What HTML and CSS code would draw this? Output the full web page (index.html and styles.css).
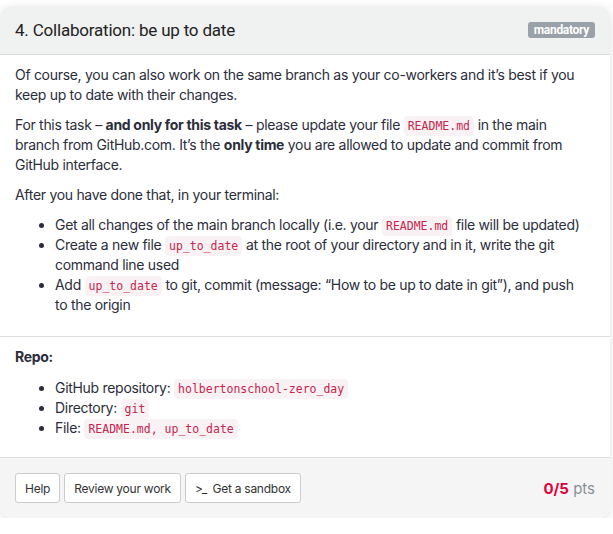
FILE: index.html
```html
<!DOCTYPE html>
<html>
<head>
<meta charset="utf-8">
<link rel="stylesheet" href="styles.css">
</head>
<body>
<div class="card">
  <div class="card-header">
    <h3 class="title">4. Collaboration: be up to date</h3>
    <span class="badge">mandatory</span>
  </div>
  <div class="card-body">
    <p>Of course, you can also work on the same branch as your co-workers and it’s best if you keep up to date with their changes.</p>
    <p>For this task – <strong>and only for this task</strong> – please update your file <code>README.md</code> in the main branch from GitHub.com. It’s the <strong>only time</strong> you are allowed to update and commit from GitHub interface.</p>
    <p>After you have done that, in your terminal:</p>
    <ul>
      <li>Get all changes of the main branch locally (i.e. your <code>README.md</code> file will be updated)</li>
      <li>Create a new file <code>up_to_date</code> at the root of your directory and in it, write the git command line used</li>
      <li>Add <code>up_to_date</code> to git, commit (message: “How to be up to date in git”), and push to the origin</li>
    </ul>
  </div>
  <div class="card-body repo">
    <p><strong>Repo:</strong></p>
    <ul>
      <li>GitHub repository: <code>holbertonschool-zero_day</code></li>
      <li>Directory: <code>git</code></li>
      <li>File: <code>README.md, up_to_date</code></li>
    </ul>
  </div>
  <div class="card-footer">
    <div class="buttons">
      <button class="btn">Help</button>
      <button class="btn">Review your work</button>
      <button class="btn"><span class="prompt">&gt;_</span> Get a sandbox</button>
    </div>
    <div class="score"><span class="pts-val">0/5</span> pts</div>
  </div>
</div>
</body>
</html>
```

FILE: styles.css
```css
html, body {
  margin: 0;
  padding: 0;
  background: #ffffff;
}
body {
  font-family: Inter, "Noto Sans", sans-serif;
  font-size: 14px;
  letter-spacing: -0.3px;
  color: #2b2d3b;
}
.card {
  margin: 6px 0 0 0;
  width: 610px;
  border-radius: 12px;
  background: #fff;
  box-shadow: 0 2px 10px rgba(0,0,0,0.12);
  overflow: hidden;
}
.card-header {
  display: flex;
  align-items: center;
  justify-content: space-between;
  background: #f0f1f1;
  height: 48px;
  padding: 0 15px;
  border-bottom: 1px solid #dddddd;
}
.title {
  margin: 0;
  font-family: Roboto, "Liberation Sans", sans-serif;
  font-weight: 400;
  font-size: 17px;
  letter-spacing: -0.2px;
  color: #222;
}
.badge {
  background: #9aa1a8;
  color: #fff;
  font-family: Roboto, "Liberation Sans", sans-serif;
  font-weight: 700;
  font-size: 12px;
  line-height: 16px;
  padding: 0 6px;
  border-radius: 3px;
  letter-spacing: -0.3px;
}
.card-body {
  padding: 10px 22px 21px 15px;
  line-height: 20px;
}
.card-body p {
  margin: 0 0 10px;
}
.card-body ul {
  margin: 0;
  padding-left: 40px;
}
.repo {
  border-top: 1px solid #dddddd;
  padding-top: 10px;
  padding-bottom: 19px;
}
.repo p {
  margin-bottom: 11px;
}
code {
  font-family: "DejaVu Sans Mono", monospace;
  font-size: 11.5px;
  line-height: 1;
  letter-spacing: 0;
  color: #c7254e;
  background: #f9f2f4;
  padding: 3px 4px;
  border-radius: 4px;
}
.card-footer {
  display: flex;
  align-items: center;
  justify-content: space-between;
  background: #f5f5f5;
  border-top: 1px solid #dddddd;
  padding: 15px 15px 15px;
}
.buttons {
  display: flex;
  gap: 4px;
}
.btn {
  font-family: Inter, "Noto Sans", sans-serif;
  font-size: 12px;
  letter-spacing: -0.25px;
  color: #333;
  background: #fff;
  border: 1px solid #cccccc;
  border-radius: 3px;
  height: 30px;
  padding: 0 9px;
}
.prompt {
  letter-spacing: -1px;
  margin-right: 3px;
}
.score {
  font-size: 15px;
  letter-spacing: 0;
  color: #8a8f98;
}
.pts-val {
  color: #e0003c;
  font-weight: 700;
}
```
